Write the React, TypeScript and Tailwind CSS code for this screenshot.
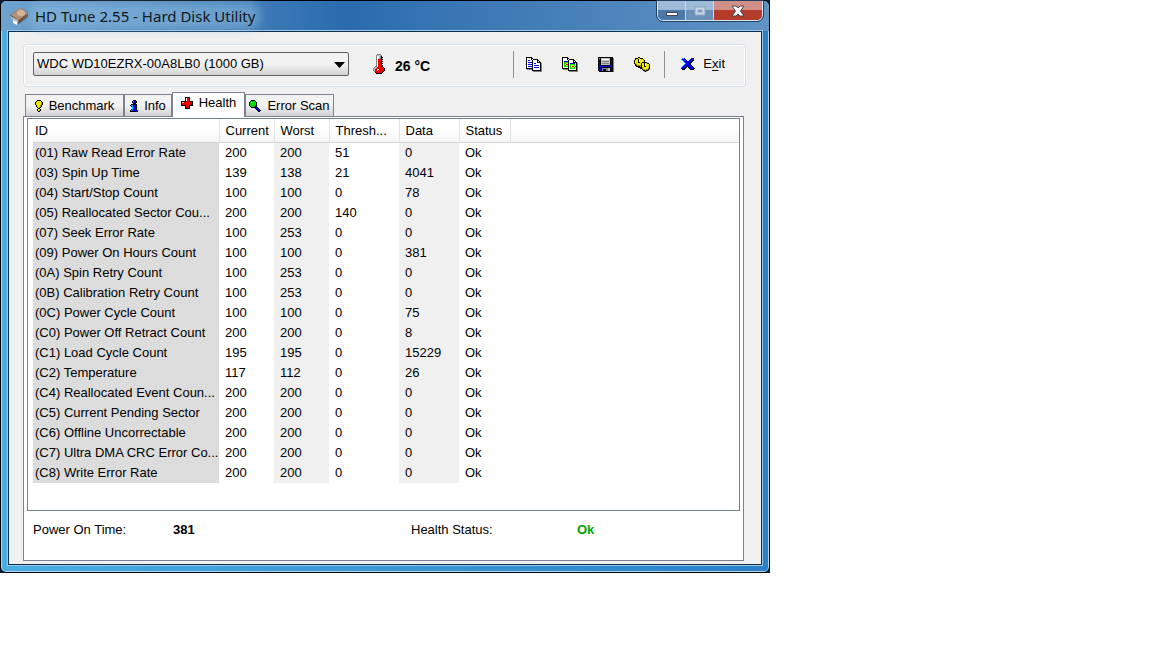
import React from "react";

type Palette = Record<string, string>;

const PALETTE: Palette = {
  k: "#000000",
  w: "#ffffff",
  g: "#808080",
  s: "#c0c0c0",
  b: "#0000e8",
  n: "#000090",
  c: "#00b8f8",
  r: "#f00000",
  m: "#900000",
  y: "#f0e800",
  o: "#989000",
  G: "#00e000",
  d: "#008000",
  p: "#ffc8c8",
};

function PixelIcon({ rows, className }: { rows: string[]; className?: string }) {
  const width = Math.max(...rows.map((r) => r.length));
  return (
    <svg
      aria-hidden="true"
      width={width}
      height={rows.length}
      viewBox={`0 0 ${width} ${rows.length}`}
      shapeRendering="crispEdges"
      className={className}
    >
      {rows.flatMap((row, y) =>
        [...row].map((ch, x) =>
          PALETTE[ch] ? <rect key={`${x}-${y}`} x={x} y={y} width={1} height={1} fill={PALETTE[ch]} /> : null,
        ),
      )}
    </svg>
  );
}

const COPY_TEXT = [
  "kkkkkk..........",
  "kwwwwkk.........",
  "kwwwwkwkkkkk....",
  "kwbbwwkwwwwkk...",
  "kwwwwwkwwwwkwk..",
  "kwbbbbkwwwwkkkk.",
  "kwwwwwkwbbwwwwkg",
  "kwbbbbkwwwwwwwkg",
  "kwwwwwkwbbbbbwkg",
  "kwbbbbkwwwwwwwkg",
  "kwwwwwkwbbbbbwkg",
  "kkkkkkkwwwwwwwkg",
  ".gggggkwwwwwwwkg",
  "......kkkkkkkkkg",
  ".......ggggggggg",
];

const COPY_IMAGE = [
  "kkkkkk..........",
  "kwwwwkk.........",
  "kwwwwkwkkkkk....",
  "kwwwwwkwwwwkk...",
  "kwbbbbkwwwwkwk..",
  "kwGGGGkwwwwkkkk.",
  "kwGGyykwbbbbbwkg",
  "kwGyrrkwGGGGGwkg",
  "kwGGyykwGyyyGwkg",
  "kwGGGGkwGyrryokg",
  "kwwwwwkwGyyyGwkg",
  "kkkkkkkwGGGGGwkg",
  ".gggggkwwwwwwwkg",
  "......kkkkkkkkkg",
  ".......ggggggggg",
];

const FLOPPY = [
  "kkkkkkkkkkkkkkk.",
  "kckssssssssskbkg",
  "kbkswwwwwwwskkkg",
  "kbkssssssssskbkg",
  "kbksgggggggskbkg",
  "kbkssssssssskbkg",
  "kbksgggggggskbkg",
  "kbkssssssssskbkg",
  "kbbkkkkkkkkkbbkg",
  "kbbbbbbbbbbbbbkg",
  "kbbkkkkkkkkkkbkg",
  "kbbkggggggsskbkg",
  "kbbkgnkkggsskbkg",
  "kbbkgnkkggsskbkg",
  ".kkkkkkkkkkkkkkg",
];

const GEARS = [
  "....kk..........",
  ".kkkyykkk.......",
  ".kyykyyyyk......",
  "kyyykwyyyyk.....",
  "kyyykwyyyyk.....",
  "kyyykkyykkkkk...",
  "koyyyyykyykyykk.",
  ".koyyyykyykwyyyk",
  ".kkooookyykwyyyk",
  "..kkkkokyykkyyyk",
  "....kkkkoyyyyyok",
  "......kkoyyyyyok",
  "........kooyookg",
  ".........kkokkg.",
  "..........gkg...",
];

const CROSS = [
  ".ccb......bbk.",
  "cbbbb....bbbk.",
  ".cbbbb..bbbkk.",
  "..cbbbbbbbkk..",
  "...cbbbbbkk...",
  "....cbbbkk....",
  "...cbbbbbk....",
  "..cbbbbbbbk...",
  ".cbbbkkbbbbk..",
  "cbbbkk.kbbbbk.",
  "bbbkk...kbbbkk",
  ".kkk.....kkkk.",
];

const EXCLAMATION = [
  "..kkkk..",
  ".kyyyyk.",
  "kywyyyok",
  "kyyyyyok",
  "kyyyyyok",
  ".kyyyok.",
  ".kyyyok.",
  "..kyok..",
  "...kk...",
  "..kyyk..",
  "..kyok..",
  "...kk...",
];

const INFO = [
  "...kkk..",
  "..kcbbk.",
  "..kbbbk.",
  "...kkk..",
  ".kkkkkk.",
  "kccbbbk.",
  ".kcbbbk.",
  "..cbbbk.",
  "..cbbbk.",
  ".kcbbbk.",
  "kcbbbbbk",
  "kkkkkkkk",
];

const HEALTH = [
  "....kkkkk...",
  "....kwrrk...",
  "....kwrrk...",
  "....kwrrk...",
  "kkkkkrrrkkkk",
  "kpprrrrrrrrk",
  "krrrrrrrrrmk",
  "krrrrrrrmmmk",
  "kkkkkrrrkkkk",
  "....krrmk...",
  "....krrmk...",
  "....kkkkk...",
];

const MAGNIFIER = [
  "..kkkk......",
  ".kGGGGk.....",
  "kGwGGGGk....",
  "kGGGGGGk....",
  "kGGGGGGk....",
  "kGGGGGdk....",
  ".kGGGdkk....",
  "..kkkkkbk...",
  "......kbbk..",
  ".......kbbk.",
  "........kbbk",
  ".........kk.",
];

const THERMOMETER = [
  "....gggg....",
  "...gssssg...",
  "...gwwsgk...",
  "...gwwsgkk..",
  "...gwssgk...",
  "...gwrrrkk..",
  "...gwrrrk...",
  "...gwrrrkk..",
  "...gwrrrk...",
  "...gwrrrkk..",
  "...gwrrrk...",
  "...gwrrrkk..",
  "..ggwrrrkk..",
  ".gssrrrrrrk.",
  "gssrrrrrrrrk",
  "gsrrwwrrrrmk",
  "gsrrwrrrrrmk",
  ".grrrrrrrmk.",
  "..krrrrrmk..",
  "...kkkkkk...",
];

function DriveIcon() {
  return (
    <svg aria-hidden="true" width="20" height="18" viewBox="0 0 20 18">
      <path d="M1 8 11 1l8 4v5l-9 7-8-5Z" fill="#6b6461" />
      <path d="M2 8 11 1l8 5-9 7Z" fill="#b39178" />
      <ellipse cx="12" cy="6" rx="4" ry="3" fill="#d6b698" />
      <path d="m1 9 8 4v3l-7-4Z" fill="#b8bcc0" />
      <path d="m4 13 4 2v3l-4-2Z" fill="#ffffff" />
      <path d="m10 13 9-7v3l-9 7Z" fill="#6a5243" />
    </svg>
  );
}

const ROWS: string[][] = [
  ["(01) Raw Read Error Rate", "200", "200", "51", "0"],
  ["(03) Spin Up Time", "139", "138", "21", "4041"],
  ["(04) Start/Stop Count", "100", "100", "0", "78"],
  ["(05) Reallocated Sector Cou...", "200", "200", "140", "0"],
  ["(07) Seek Error Rate", "100", "253", "0", "0"],
  ["(09) Power On Hours Count", "100", "100", "0", "381"],
  ["(0A) Spin Retry Count", "100", "253", "0", "0"],
  ["(0B) Calibration Retry Count", "100", "253", "0", "0"],
  ["(0C) Power Cycle Count", "100", "100", "0", "75"],
  ["(C0) Power Off Retract Count", "200", "200", "0", "8"],
  ["(C1) Load Cycle Count", "195", "195", "0", "15229"],
  ["(C2) Temperature", "117", "112", "0", "26"],
  ["(C4) Reallocated Event Coun...", "200", "200", "0", "0"],
  ["(C5) Current Pending Sector", "200", "200", "0", "0"],
  ["(C6) Offline Uncorrectable", "200", "200", "0", "0"],
  ["(C7) Ultra DMA CRC Error Co...", "200", "200", "0", "0"],
  ["(C8) Write Error Rate", "200", "200", "0", "0"],
];

const HEADERS = ["ID", "Current", "Worst", "Thresh...", "Data", "Status"];

const TABS = [
  { label: "Benchmark", icon: EXCLAMATION, width: "w-[99px]" },
  { label: "Info", icon: INFO, width: "w-[48px]" },
  { label: "Health", icon: HEALTH, width: "w-[73px]" },
  { label: "Error Scan", icon: MAGNIFIER, width: "w-[89px]" },
];

function TitleBar() {
  return (
    <header className="flex h-[30px] items-start justify-between rounded-t-md bg-linear-to-r from-[#6fa3cf] via-[#2b6cae] via-45% to-[#5f93c4] pr-1.5 pl-2">
      <div className="flex h-[30px] items-center gap-1.5">
        <DriveIcon />
        <h1 className="rounded-full bg-[#8fbde0]/50 font-['Noto_Sans',sans-serif] text-[15px] leading-4 text-[#101820] shadow-[0_0_8px_6px_rgba(143,189,224,0.5)]">
          HD Tune 2.55 - Hard Disk Utility
        </h1>
      </div>
      <div className="flex h-5 overflow-hidden rounded-b-md border border-t-0 border-[#dbe8f4] outline outline-[#1f3f63]">
        <button
          aria-label="Minimize"
          className="flex w-7 items-center justify-center border-r border-[#c8d8e8] bg-linear-to-b from-[#9dbad6] from-45% to-[#4c7aa8] to-50%"
        >
          <svg width="14" height="12" viewBox="0 0 14 12" aria-hidden="true">
            <rect x="1.5" y="7.5" width="11" height="3" fill="#fff" stroke="#445" />
          </svg>
        </button>
        <button
          aria-label="Maximize"
          className="flex w-7 items-center justify-center border-r border-[#c8d8e8] bg-linear-to-b from-[#9dbad6] from-45% to-[#6890b8] to-50%"
        >
          <svg width="12" height="10" viewBox="0 0 12 10" aria-hidden="true">
            <path d="M1 1h10v8H1zM4 4v2h4V4z" fill="#c5d5e5" fillRule="evenodd" stroke="#8ba6c2" />
          </svg>
        </button>
        <button
          aria-label="Close"
          className="flex w-12 items-center justify-center bg-linear-to-b from-[#d09088] from-45% to-[#b43a2a] to-50%"
        >
          <svg width="14" height="12" viewBox="0 0 14 12" aria-hidden="true">
            <path d="M1 1h4l2 2 2-2h4L9.500 6l3.500 5H9L7 9l-2 2H1l3.500-5Z" fill="#fff" stroke="#484850" />
          </svg>
        </button>
      </div>
    </header>
  );
}

function Toolbar() {
  return (
    <div className="flex h-[43px] items-center rounded-sm border border-[#d4dfea] pr-2 pb-[3px] pl-[9px] shadow-[inset_0_0_0_1px_#ffffff]">
      <div className="relative w-[316px] shrink-0">
        <select
          aria-label="Drive"
          className="h-6 w-full appearance-none rounded-xs border border-[#606060] bg-linear-to-b from-[#f2f2f2] from-50% to-[#d2d2d2] pl-[3px] text-[13px] text-black"
        >
          <option>WDC WD10EZRX-00A8LB0 (1000 GB)</option>
        </select>
        <svg
          className="pointer-events-none absolute top-2.5 right-1"
          width="11"
          height="6"
          viewBox="0 0 11 6"
          aria-hidden="true"
        >
          <path d="M0 0h11L5.500 6Z" fill="#000" />
        </svg>
      </div>
      <PixelIcon rows={THERMOMETER} className="ml-6 shrink-0" />
      <output className="ml-2.5 pt-1 text-[14px] font-bold whitespace-nowrap">26 °C</output>
      <div className="ml-auto flex items-center">
        <div className="flex h-[27px] items-center gap-5 border-l border-[#909090] pr-3.5 pl-3">
          <button aria-label="Copy text">
            <PixelIcon rows={COPY_TEXT} />
          </button>
          <button aria-label="Copy screenshot">
            <PixelIcon rows={COPY_IMAGE} />
          </button>
          <button aria-label="Save screenshot">
            <PixelIcon rows={FLOPPY} />
          </button>
          <button aria-label="Options">
            <PixelIcon rows={GEARS} />
          </button>
        </div>
        <button className="flex h-[27px] items-center gap-2 border-l border-[#909090] pr-3 pl-4">
          <PixelIcon rows={CROSS} />
          <span>
            E<span className="underline underline-offset-2">x</span>it
          </span>
        </button>
      </div>
    </div>
  );
}

function Tabs() {
  return (
    <div role="tablist" className="flex h-6 items-end pl-0.5">
      {TABS.map(({ label, icon, width }) => {
        const active = label === "Health";
        const look = active
          ? "z-10 -mb-px h-[25px] bg-white pb-1"
          : "h-[22px] bg-linear-to-b from-[#f2f2f2] from-50% to-[#d0d0d0]";
        return (
          <button
            key={label}
            role="tab"
            aria-selected={active}
            className={`flex items-center justify-center gap-1.5 border border-b-0 border-[#808090] whitespace-nowrap ${look} ${width}`}
          >
            <PixelIcon rows={icon} />
            {label}
          </button>
        );
      })}
    </div>
  );
}

function HealthTable() {
  return (
    <div className="h-[393px] border border-[#70808e] bg-white pl-[5px]">
      <table className="w-full table-fixed border-collapse text-left">
        <colgroup>
          <col className="w-[186px]" />
          <col className="w-[55px]" />
          <col className="w-[55px]" />
          <col className="w-[70px]" />
          <col className="w-[60px]" />
          <col className="w-[51px]" />
          <col />
        </colgroup>
        <thead>
          <tr className="h-6 bg-linear-to-b from-white from-40% to-[#f4f4f5] shadow-[inset_0_-1px_0_#d5d5d5]">
            {HEADERS.map((h, i) => (
              <th
                key={h}
                scope="col"
                className={
                  i === 0
                    ? "border-r border-[#e0e3e8] p-0 pl-0.5 font-normal"
                    : "border-r border-[#e0e3e8] p-0 pl-1.5 font-normal whitespace-nowrap"
                }
              >
                {h}
              </th>
            ))}
            <td />
          </tr>
        </thead>
        <tbody>
          {ROWS.map(([id, current, worst, threshold, data]) => (
            <tr key={id} className="h-5">
              <td className="bg-[#dcdcdc] p-0 pl-0.5 whitespace-nowrap">{id}</td>
              <td className="p-0 pl-1.5">{current}</td>
              <td className="bg-[#f0f0f0] p-0 pl-1.5">{worst}</td>
              <td className="p-0 pl-1.5">{threshold}</td>
              <td className="bg-[#f0f0f0] p-0 pl-1.5">{data}</td>
              <td className="p-0 pl-1.5">Ok</td>
              <td />
            </tr>
          ))}
        </tbody>
      </table>
    </div>
  );
}

export default function App() {
  return (
    <div className="min-h-screen bg-white font-['Liberation_Sans',Arial,sans-serif] text-[13px] leading-5 text-black">
      <div className="w-full max-w-[770px] bg-[#071c38]">
        <div className="rounded-md border border-black bg-linear-to-r from-[#4aaee2] to-[#2b80c8] shadow-[inset_0_0_0_1px_#a8d8f4]">
          <TitleBar />
          <div className="px-[7px] pb-[7px]">
            <main className="border border-[#0d2f50] bg-[#f0f0f0] pt-3 pr-[15px] pb-[3px] pl-3.5 outline outline-[#9cc8e8]">
              <Toolbar />
              <div className="pt-[5px] pr-0.5">
                <Tabs />
                <section role="tabpanel" className="border border-[#808090] bg-white px-[3px] pt-px">
                  <HealthTable />
                  <dl className="flex h-[49px] items-center px-1.5 pb-3">
                    <dt className="w-[140px]">Power On Time:</dt>
                    <dd className="w-[238px] font-bold">381</dd>
                    <dt className="w-[166px]">Health Status:</dt>
                    <dd className="font-bold text-[#00a800]">Ok</dd>
                  </dl>
                </section>
              </div>
            </main>
          </div>
        </div>
      </div>
    </div>
  );
}
